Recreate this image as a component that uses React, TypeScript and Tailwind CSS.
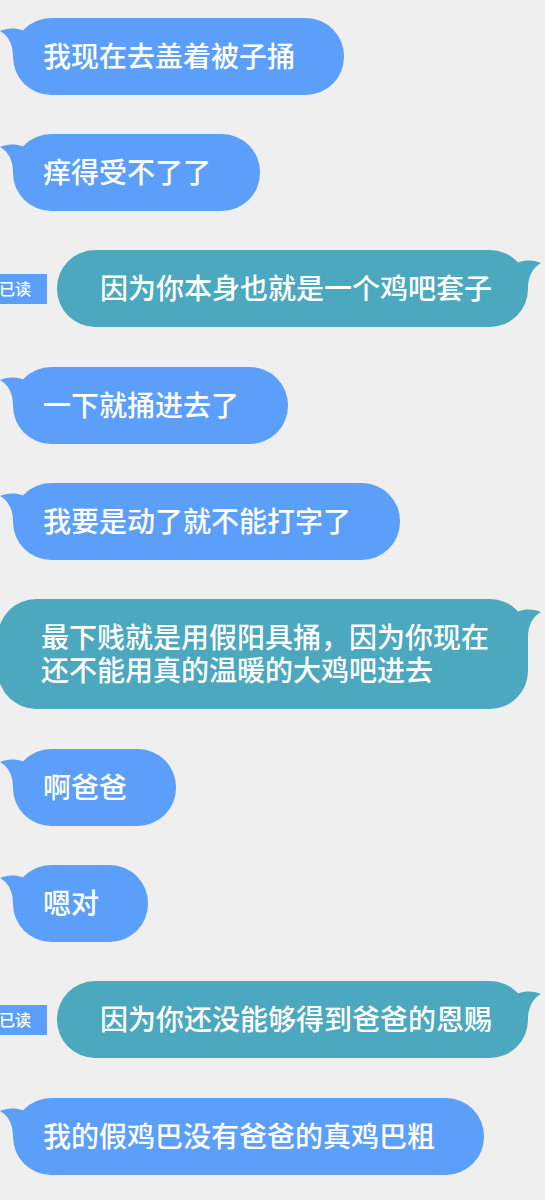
import React from "react";

interface ChatMessage {
  id: number;
  from: "them" | "me";
  text: string;
  read?: boolean;
}

const messages: ChatMessage[] = [
  { id: 1, from: "them", text: "我现在去盖着被子捅" },
  { id: 2, from: "them", text: "痒得受不了了" },
  { id: 3, from: "me", text: "因为你本身也就是一个鸡吧套子", read: true },
  { id: 4, from: "them", text: "一下就捅进去了" },
  { id: 5, from: "them", text: "我要是动了就不能打字了" },
  {
    id: 6,
    from: "me",
    text: "最下贱就是用假阳具捅，因为你现在还不能用真的温暖的大鸡吧进去",
  },
  { id: 7, from: "them", text: "啊爸爸" },
  { id: 8, from: "them", text: "嗯对" },
  { id: 9, from: "me", text: "因为你还没能够得到爸爸的恩赐", read: true },
  { id: 10, from: "them", text: "我的假鸡巴没有爸爸的真鸡巴粗" },
];

// Small curved tail at the top corner of a bubble
function Tail({ className }: { className: string }) {
  return (
    <svg
      viewBox="0 0 40 40"
      className={`absolute top-0 h-10 w-10 ${className}`}
      fill="currentColor"
      aria-hidden="true"
    >
      <path d="M0 13C6 10 15 9.4 23 12.4L34 20L24 38H13C13 27 8.5 17.5 0 13Z" />
    </svg>
  );
}

function Received({ message }: { message: ChatMessage }) {
  return (
    <li className="mb-[39px] flex pl-[13px]">
      <div className="relative rounded-[38px] bg-[#5c9ffb] pt-[21px] pr-[49px] pb-[23px] pl-[30px]">
        <Tail className="-left-[13px] text-[#5c9ffb]" />
        <p className="relative text-[28px] leading-[33px] font-medium text-white">
          {message.text}
        </p>
      </div>
    </li>
  );
}

function Sent({ message }: { message: ChatMessage }) {
  return (
    <li className="mb-10 flex items-center justify-end gap-[10px] pr-[17px]">
      {message.read && (
        <span className="shrink-0 bg-[#5c9ffb] pr-4 pb-px pl-4 text-base leading-[29px] font-medium text-white">
          已读
        </span>
      )}
      <div className="relative max-w-[530px] shrink-0 rounded-[38px] bg-[#4ca8bf] pt-[21px] pr-9 pb-[23px] pl-[43px]">
        <Tail className="-right-[13px] -scale-x-100 text-[#4ca8bf]" />
        <p className="relative text-[28px] leading-[33px] font-medium text-white">
          {message.text}
        </p>
      </div>
    </li>
  );
}

export default function App() {
  return (
    <main className="min-h-screen overflow-hidden bg-[#efefef] pt-[18px] font-['Noto_Sans_CJK_SC',sans-serif]">
      <ul lang="zh-CN" className="-mb-4">
        {messages.map((message) =>
          message.from === "me" ? (
            <Sent key={message.id} message={message} />
          ) : (
            <Received key={message.id} message={message} />
          )
        )}
      </ul>
    </main>
  );
}
